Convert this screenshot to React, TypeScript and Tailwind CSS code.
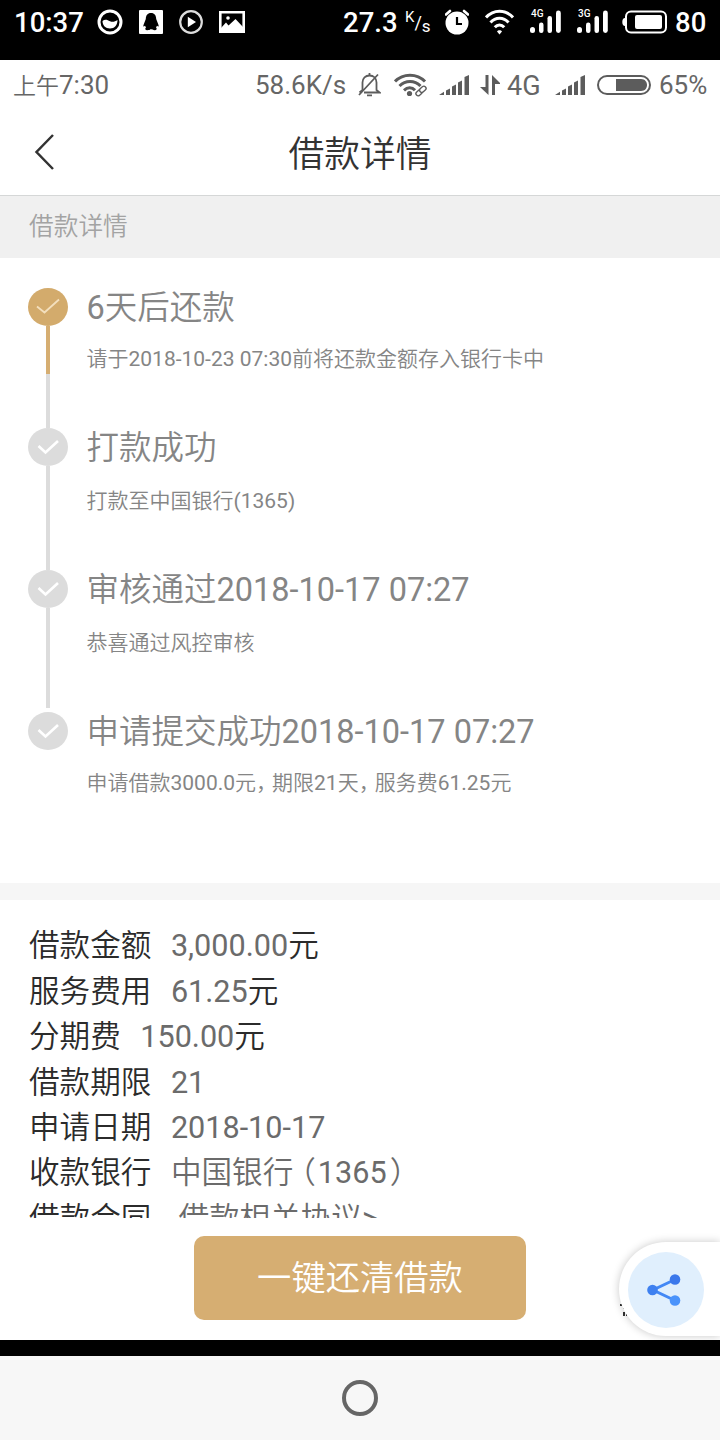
import { Fragment, type ReactNode } from "react";

type Step = {
  title: string;
  desc: string;
  active?: boolean;
  height: string;
  gap: string;
  lines: string[];
};

const STEPS: Step[] = [
  {
    title: "6天后还款",
    desc: "请于2018-10-23 07:30前将还款金额存入银行卡中",
    active: true,
    height: "h-[140px]",
    gap: "mt-[17px]",
    lines: ["h-12 bg-[#d6ae72]", "h-[54px] bg-[#dcdcdc]"],
  },
  {
    title: "打款成功",
    desc: "打款至中国银行(1365)",
    height: "h-[142px]",
    gap: "mt-[19px]",
    lines: ["h-[104px] bg-[#dcdcdc]"],
  },
  {
    title: "审核通过2018-10-17 07:27",
    desc: "恭喜通过风控审核",
    height: "h-[142px]",
    gap: "mt-[19px]",
    lines: ["h-[100px] bg-[#dcdcdc]"],
  },
  {
    title: "申请提交成功2018-10-17 07:27",
    desc: "申请借款3000.0元，期限21天，服务费61.25元",
    height: "h-[171px]",
    gap: "mt-[17px]",
    lines: [],
  },
];

const DETAILS = [
  { label: "借款金额", value: "3,000.00", unit: "元" },
  { label: "服务费用", value: "61.25", unit: "元" },
  { label: "分期费", value: "150.00", unit: "元" },
  { label: "借款期限", value: "21" },
  { label: "申请日期", value: "2018-10-17" },
  { label: "收款银行", value: "中国银行（1365）" },
  { label: "借款合同", value: "借款相关协议>", indent: true },
];

// Chinese glyphs are set lighter than the digits next to them
function Mixed({ children }: { children: string }) {
  const parts = children.split(/([\u3000-\u9fff]+|，|（|）)/);
  return (
    <>
      {parts.map((part, i) => {
        if (part === "，") return <span key={i} className="font-[350] tracking-[-5px]">{part}</span>;
        if (part === "（") return <span key={i} className="mr-0.5 -ml-2 font-[350]">{part}</span>;
        if (part === "）") return <span key={i} className="ml-[3px] font-[350]">{part}</span>;
        if (i % 2 === 1) return <span key={i} className="font-[350]">{part}</span>;
        return <Fragment key={i}>{part}</Fragment>;
      })}
    </>
  );
}

function Signal({ label }: { label: string }) {
  return (
    <div className="relative h-6 w-8">
      <svg viewBox="0 0 32 24" className="h-6 w-8" fill="#fff">
        <rect x="0" y="17" width="5" height="6" rx="2.5" />
        <rect x="9" y="12.500" width="4.500" height="10.500" rx="2.200" />
        <rect x="17.500" y="6" width="4.500" height="17" rx="2.200" />
        <rect x="26" y="0.500" width="4.800" height="22.500" rx="2.400" />
      </svg>
      <span className="absolute -top-[1px] left-[1px] text-[10px] leading-[10px] font-medium">{label}</span>
    </div>
  );
}

function GreySignal() {
  return (
    <svg viewBox="0 0 30 20" className="ml-3 h-5 w-[30px]" fill="#5c5c5c">
      <path d="M0 20 5 16.800V20ZM7 20v-4.500l4-2V20ZM13 20v-8.500l4-2V20ZM19 20V7.500l4-2V20ZM25.500 20V2L30 0V20Z" />
    </svg>
  );
}

function SystemBar() {
  return (
    <div className="flex h-[60px] items-start bg-black pl-[14px] text-[27.500px] leading-none font-medium text-white">
      <div className="flex h-11 items-center">
        <span className="w-[70px] pt-0.5 whitespace-nowrap">10:37</span>
        <svg viewBox="0 0 26 26" className="ml-[13px] h-[26px] w-[26px]">
          <circle cx="13" cy="13" r="11" fill="none" stroke="#fff" strokeWidth="3" />
          <path d="M5.500 12c2.500-2 5-1 7.500.3 2.500 1 5 .5 7.500-1.300 0 5-3 8.500-7.500 8.500S5.500 16.500 5.500 12Z" fill="#fff" />
        </svg>
        <svg viewBox="0 0 24 24" className="ml-4 h-6 w-6">
          <rect width="24" height="24" rx="1" fill="#fff" />
          <path d="M12 3c-3.500 0-5.200 2.600-5.200 6L4.500 15c-.4 1.500 0 2.200 1.500.8l1 1.700c-1.300 1-.8 2.700 1.300 2.700 1.600 0 2.700-.4 3.700-1.200 1 .8 2.100 1.200 3.700 1.200 2.100 0 2.600-1.700 1.300-2.700l1-1.700c1.500 1.400 1.900.7 1.500-.8L17.200 9c0-3.400-1.700-6-5.200-6Z" fill="#000" />
        </svg>
        <svg viewBox="0 0 24 24" className="ml-4 h-6 w-6">
          <circle cx="12" cy="12" r="10.800" fill="none" stroke="#ddd" strokeWidth="2.200" />
          <path d="M8.800 6.800 17 12l-8.200 5.200Z" fill="#fff" />
        </svg>
        <svg viewBox="0 0 26 22" className="ml-4 h-[22px] w-[26px]">
          <path d="M1.300 1.300h23.400v19.400H1.300Z" fill="none" stroke="#fff" strokeWidth="2.600" />
          <path d="M2 19v-2l5-5.500 2.500 3 7-6.500L24 16v4H2Z" fill="#fff" />
          <circle cx="9" cy="7" r="1.800" fill="#fff" />
        </svg>
        <span className="ml-[98px] w-[58px] pt-0.5">27.3</span>
        <span className="ml-1 flex h-[22px] w-[25px] leading-none font-normal">
          <span className="-mt-[1px] text-[15px]">K</span>
          <span className="mt-[3px] text-[18px]">/</span>
          <span className="mt-[7px] text-[17px]">s</span>
        </span>
        <svg viewBox="0 0 24 26" className="ml-[15px] h-[26px] w-6">
          <circle cx="12" cy="14" r="11.500" fill="#fff" />
          <path d="M1 5.500 5 2M23 5.500 19 2" stroke="#fff" strokeWidth="2.600" strokeLinecap="round" />
          <path d="M12 8v7h5" fill="none" stroke="#000" strokeWidth="2.200" />
        </svg>
        <svg viewBox="0 0 29 26" className="ml-4 h-[26px] w-[29px]" fill="none" stroke="#fff" strokeWidth="3">
          <path d="M1 8.500C8.500 0 20.500 0 28 8.500M5.500 13.500c5-5.600 13-5.600 18 0M9.800 18.300c2.700-3 6.700-3 9.400 0" />
          <path d="m14.500 25.500-2.500-3c1-1.600 4-1.600 5 0Z" fill="#fff" stroke="none" />
        </svg>
        <div className="ml-4"><Signal label="4G" /></div>
        <div className="ml-[15px]"><Signal label="3G" /></div>
        <svg viewBox="0 0 45 24" className="ml-[13px] h-6 w-[45px]">
          <rect x="4" y="1.500" width="40" height="21" rx="5" fill="none" stroke="#fff" strokeWidth="2" />
          <path d="M3 8C1 8 .3 10 .3 12S1 16 3 16Z" fill="#fff" />
          <rect x="13" y="5" width="27" height="14" rx="2" fill="#fff" />
        </svg>
        <span className="ml-2 pt-0.5">80</span>
      </div>
    </div>
  );
}

function PhoneBar() {
  return (
    <div className="flex h-[50px] items-center pl-[13px] text-[26px] leading-none whitespace-nowrap text-[#666]">
      <span className="w-[98px]"><span className="text-[23px] font-[350]">上午</span>7:30</span>
      <span className="ml-36 w-[91px]">58.6K/s</span>
      <svg viewBox="0 0 23 24" className="ml-3 h-6 w-[23px]" fill="none" stroke="#5c5c5c" strokeWidth="1.800">
        <path d="M4.500 17V9.500C4.500 5 7.500 2.500 11.500 2.500S18.500 5 18.500 9.500V17l3 2.500H6M1.500 19.500 4.500 17M1 22 20 1.500" />
        <path d="M9 22.300h5M11.500 0v2" />
      </svg>
      <svg viewBox="0 0 33 24" className="ml-[13px] h-6 w-[33px]" fill="none" stroke="#5c5c5c" strokeWidth="3">
        <path d="M1 8.500c8-8.500 22-8.500 30 0M5.500 13c6-6 15-6 21 0M10 17.300c3.500-3.300 8-3.300 11 0" />
        <circle cx="15.500" cy="20.500" r="2.600" fill="#5c5c5c" stroke="none" />
        <g strokeWidth="1.400" transform="rotate(-42 27 18)">
          <rect x="21" y="15.800" width="7" height="4.400" rx="2.200" fill="#fff" />
          <rect x="26" y="15.800" width="7" height="4.400" rx="2.200" fill="#fff" />
        </g>
      </svg>
      <GreySignal />
      <svg viewBox="0 0 20 20" className="ml-[11px] h-5 w-5" fill="#5c5c5c">
        <path d="M5.500 0H8.500V20L0 12H5.500ZM12 20h3V9h6L12 0Z" />
      </svg>
      <span className="ml-[7px] w-9 pt-0.5 text-[27px]">4G</span>
      <GreySignal />
      <svg viewBox="0 0 55 20" className="ml-3 h-5 w-[55px]">
        <rect x="1" y="1" width="52" height="18" rx="9" fill="none" stroke="#5c5c5c" strokeWidth="2" />
        <path d="M19 4h25c8 0 8 12 0 12H19Z" fill="#5c5c5c" />
      </svg>
      <span className="ml-[7px]">65%</span>
    </div>
  );
}

function StepMarker({ active }: { active?: boolean }) {
  return (
    <svg viewBox="0 0 40 38" className="h-[38px] w-10 shrink-0">
      <ellipse cx="20" cy="19" rx="20" ry="19" fill={active ? "#d3ab6c" : "#dcdcdc"} />
      {active ? (
        <path d="m9 18.500 7.500 6L31 11.500" fill="none" stroke="#f3dfbd" strokeWidth="1.800" />
      ) : (
        <path d="m10.500 18 7 6.500 12.500-11.500" fill="none" stroke="#fff" strokeWidth="2.600" />
      )}
    </svg>
  );
}

function Timeline() {
  return (
    <section className="h-[625px] pt-[30px] pl-7">
      {STEPS.map((step) => (
        <div key={step.title} className={`flex gap-[18.500px] ${step.height}`}>
          <div className="flex w-10 flex-col items-center">
            <StepMarker active={step.active} />
            {step.lines.map((line) => (
              <div key={line} className={`w-1 shrink-0 ${line}`} />
            ))}
          </div>
          <div className="pt-[1px] whitespace-nowrap text-[#858585]">
            <h2 className="text-[32.500px] leading-[38px] font-normal"><Mixed>{step.title}</Mixed></h2>
            <p className={`text-[21px] leading-[30px] ${step.gap}`}><Mixed>{step.desc}</Mixed></p>
          </div>
        </div>
      ))}
    </section>
  );
}

function Details() {
  return (
    <section className="h-[318px] overflow-hidden pt-6 pl-[29px]">
      {DETAILS.map((row) => (
        <div key={row.label} className="flex h-[45.400px] items-center text-[30.600px] leading-none whitespace-nowrap">
          <span className="font-[350] text-[#2b2b2b]">{row.label}</span>
          <span className={`text-[#6b6b6b] ${row.indent ? "ml-[27px]" : "ml-[19.500px]"}`}><Mixed>{row.value}</Mixed></span>
          {row.unit && <span className="font-[350] text-[#2b2b2b]">{row.unit}</span>}
        </div>
      ))}
    </section>
  );
}

function ShareBubble() {
  return (
    <div className="absolute top-[1242px] right-0 flex h-[94px] w-[101px] items-center rounded-l-full bg-white pt-0.5 pl-[9px] shadow-[0_0_8px_rgba(0,0,0,0.22)]">
      <div className="flex h-[76px] w-[76px] items-center justify-center rounded-full bg-[#e0effd] pr-1">
        <svg viewBox="0 0 34 32" className="h-8 w-[34px]">
          <path d="M28 5.500 6 16l22 10.500" fill="none" stroke="#4388f5" strokeWidth="3" />
          <circle cx="28" cy="5.500" r="5.300" fill="#3b78eb" />
          <circle cx="5.500" cy="16" r="5.300" fill="#3e80f0" />
          <circle cx="28" cy="26.500" r="5.300" fill="#4a93fb" />
        </svg>
      </div>
    </div>
  );
}

function Screen({ children }: { children: ReactNode }) {
  return (
    <div className="relative h-[1440px] w-[720px] overflow-hidden bg-white font-[Roboto,'Noto_Sans_CJK_SC',sans-serif]">
      {children}
    </div>
  );
}

export default function App() {
  return (
    <Screen>
      <SystemBar />
      <PhoneBar />

      <header className="grid h-[86px] grid-cols-[100px_1fr_100px] items-center border-b border-[#d5d7d7]">
        <svg viewBox="0 0 24 40" className="ml-8 h-10 w-6" fill="none" stroke="#333" strokeWidth="2.500">
          <path d="M21 2 4.500 19 21 36" />
        </svg>
        <h1 className="pt-[7px] text-center text-[35.800px] leading-none font-[350] text-[#333]">借款详情</h1>
      </header>

      <div className="flex h-[62px] items-center bg-[#f0f0f0] pl-[29px] text-[24.700px] leading-none font-[350] text-[#a3a3a3]">
        借款详情
      </div>

      <Timeline />
      <div className="h-[17px] bg-[#f6f6f6]" />
      <Details />

      <div className="flex h-[122px] justify-center pt-[18px]">
        <button className="h-[84px] w-[332px] rounded-[10px] bg-[#d6ae72] text-[34.300px] leading-none font-[350] text-white">
          一键还清借款
        </button>
      </div>

      <div className="h-4 bg-black" />
      <nav className="flex h-[84px] items-center justify-center bg-[#f7f7f7]">
        <div className="h-9 w-9 rounded-full border-4 border-[#666]" />
      </nav>

      {/* edge of the toast peeking out behind the share bubble */}
      <svg viewBox="0 0 10 16" className="absolute top-[1303px] left-[619px] h-4 w-[10px]" fill="#333">
        <path d="M1 1h2v2H1ZM4 5h2v1H4ZM4 9h2v4H4ZM7 11h1v2H7Z" />
      </svg>
      <ShareBubble />
    </Screen>
  );
}
